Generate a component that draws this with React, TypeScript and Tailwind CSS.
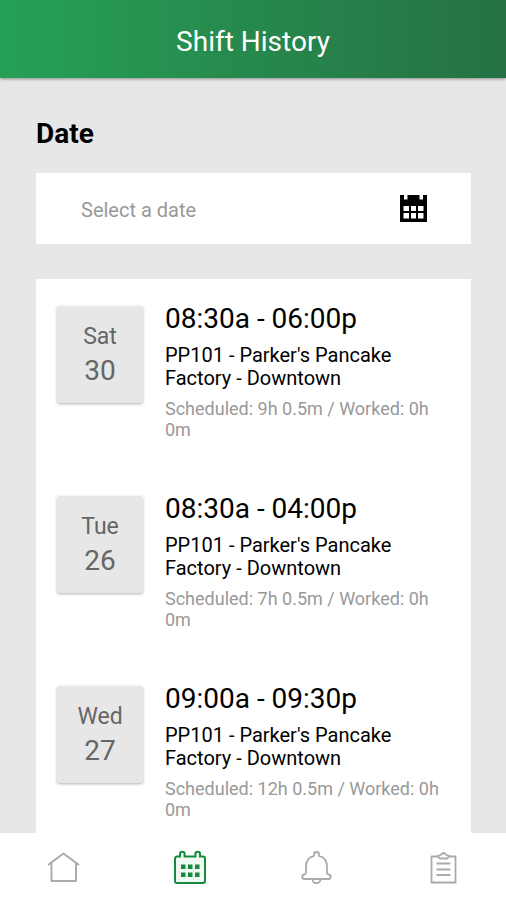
import { useState } from "react";

const shifts = [
  { weekday: "Sat", day: "30", time: "08:30a - 06:00p", scheduled: "9h 0.5m", worked: "0h 0m" },
  { weekday: "Tue", day: "26", time: "08:30a - 04:00p", scheduled: "7h 0.5m", worked: "0h 0m" },
  { weekday: "Wed", day: "27", time: "09:00a - 09:30p", scheduled: "12h 0.5m", worked: "0h 0m" },
];

function HomeIcon() {
  return (
    <svg width="34" height="34" viewBox="0 0 34 34" fill="none" stroke="currentColor" strokeWidth="1.9" strokeLinejoin="round">
      <path d="M2 15 17.500 3.500 33 15" />
      <path d="M5.500 13v18H30V13" />
    </svg>
  );
}

function CalendarIcon() {
  return (
    <svg width="34" height="34" viewBox="0 0 34 34" fill="none">
      <path
        d="M4 6.500H7V4a2.300 2.300 0 0 1 4.600 0v2.500h10.800V4A2.300 2.300 0 0 1 27 4v2.500h3a2 2 0 0 1 2 2V31a2 2 0 0 1-2 2H4a2 2 0 0 1-2-2V8.500a2 2 0 0 1 2-2Z"
        fill="#effaf2"
        stroke="currentColor"
        strokeWidth="2"
      />
      <path d="M8 14.500h4.500V19H8zM15 14.500h4.500V19H15zM22 14.500h4.500V19H22zM8 22.500h4.500V27H8zM15 22.500h4.500V27H15zM22 22.500h4.500V27H22z" fill="currentColor" />
    </svg>
  );
}

function BellIcon() {
  return (
    <svg width="34" height="34" viewBox="0 0 34 34" fill="none" stroke="currentColor" strokeWidth="1.8" strokeLinejoin="round">
      <path d="M15 4.500a2.500 2.500 0 0 1 5 0v1.300C25.500 7 28 11.500 28 17v6c0 1 .8 1.300 1.800 1.500 2.700.6 2.700 4.500-.3 4.500h-24c-3 0-3-3.900-.3-4.500C6.200 24.300 7 24 7 23v-6c0-5.500 2.500-10 8-11.200Z" />
      <path d="M13.500 29.500a4 3.500 0 0 0 8 0" />
    </svg>
  );
}

function ClipboardIcon() {
  return (
    <svg width="34" height="34" viewBox="0 0 34 34" fill="none" stroke="currentColor" strokeWidth="1.8" strokeLinejoin="round">
      <path d="M12 6.500H5.500v26h24v-26H23" />
      <path d="m11.500 6 4-1.500c.8-2 3.200-2 4 0l4 1.500-2.500 2.500h-7Z" />
      <path d="M10.500 13.500h14M10.500 19.500h14M10.500 25h14" />
    </svg>
  );
}

function PickerIcon() {
  return (
    <svg width="27" height="27" viewBox="0 0 27 27">
      <path
        fillRule="evenodd"
        fill="currentColor"
        d="M0 0h4v4.500h3.500V0h12v4.500H23V0h4v27H0ZM3.500 11v5H9v-5Zm7.500 0v5h5v-5Zm7 0v5h5.500v-5ZM3.500 18v5.500H9V18Zm7.500 0v5.500h5V18Zm7 0v5.500h5.500V18Z"
      />
    </svg>
  );
}

const tabs = [
  { label: "Home", Icon: HomeIcon },
  { label: "Shifts", Icon: CalendarIcon },
  { label: "Notifications", Icon: BellIcon },
  { label: "Tasks", Icon: ClipboardIcon },
];

export default function App() {
  const [date, setDate] = useState("");
  const [active, setActive] = useState("Shifts");

  return (
    <div className="flex h-screen flex-col bg-[#e7e7e7] font-['Roboto',sans-serif] text-black">
      <header className="z-10 flex h-[78px] shrink-0 items-center justify-center bg-linear-to-r from-[#25a156] to-[#257143] pt-1.5 shadow-[0_1px_3px_rgba(0,0,0,0.4)]">
        <h1 className="text-[28px] leading-8 text-white">Shift History</h1>
      </header>

      <main className="min-h-0 flex-1 overflow-hidden pt-10 pr-[35px] pl-9">
        <label htmlFor="date" className="block text-[28px] leading-8 font-bold">
          Date
        </label>
        <div className="mt-[23px] flex h-[71px] items-center bg-white pr-11 pl-[45px]">
          <input
            id="date"
            type="text"
            value={date}
            onChange={(e) => setDate(e.target.value)}
            placeholder="Select a date"
            className="h-full min-w-0 flex-1 pt-0.5 text-[20px] outline-none placeholder:text-[#999]"
          />
          <button type="button" aria-label="Open calendar">
            <PickerIcon />
          </button>
        </div>

        <ul className="mt-[35px] bg-white pt-6 pr-5 pl-[21px]">
          {shifts.map((shift) => (
            <li key={shift.weekday} className="flex min-h-[190px] items-start gap-[22px]">
              <div className="mt-[3px] flex h-[97px] w-[86px] shrink-0 flex-col items-center justify-center rounded-[3px] bg-[#e7e7e7] pb-0.5 text-[#666] shadow-[0_1px_3px_rgba(0,0,0,0.3)]">
                <span className="text-[23px] leading-[34px]">{shift.weekday}</span>
                <span className="text-[28px] leading-[34px]">{shift.day}</span>
              </div>
              <div className="min-w-0 flex-1">
                <h2 className="text-[28px] leading-8">{shift.time}</h2>
                <p className="mt-[9px] pr-8 text-[20px] leading-[23px]">PP101 - Parker's Pancake Factory - Downtown</p>
                <p className="mt-2 text-[18px] leading-[21px] text-[#999]">
                  {`Scheduled: ${shift.scheduled} / Worked: ${shift.worked}`}
                </p>
              </div>
            </li>
          ))}
        </ul>
      </main>

      <nav className="grid h-[67px] shrink-0 grid-cols-4 bg-white">
        {tabs.map(({ label, Icon }) => (
          <button
            key={label}
            type="button"
            aria-label={label}
            aria-current={active === label ? "page" : undefined}
            onClick={() => setActive(label)}
            className={`flex items-center justify-center ${active === label ? "text-[#168a3c]" : "text-[#aaa]"}`}
          >
            <Icon />
          </button>
        ))}
      </nav>
    </div>
  );
}
